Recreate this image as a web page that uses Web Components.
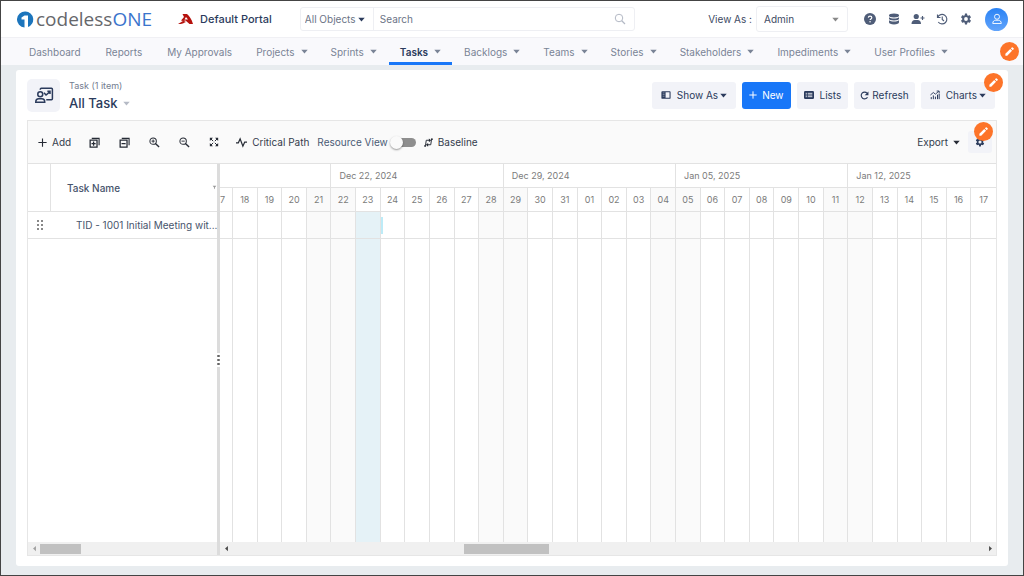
<!DOCTYPE html>
<html lang="en">
<head>
<meta charset="utf-8">
<meta name="viewport" content="width=device-width, initial-scale=1">
<title>All Task - Default Portal</title>
<style>
  body {
    margin: 0;
    font: 10px/14px Inter, "Liberation Sans", sans-serif;
    color: #3d4a63;
    --navy: #2b3b5c;
    --line: #e2e2e2;
    --soft: #f2f3f8;
    --blue: #1877f8;
  }
</style>
</head>
<body>
<task-app></task-app>

<script>
const define = (name, css, html, setup) => {
  const tpl = document.createElement('template');
  tpl.innerHTML = `<style>*{box-sizing:border-box}button,input,select{font:inherit;color:inherit;margin:0}${css}</style>${html}`;
  customElements.define(name, class extends HTMLElement {
    constructor() {
      super();
      this.attachShadow({ mode: 'open' }).append(tpl.content.cloneNode(true));
    }
    connectedCallback() {
      if (setup && !this.ready) { this.ready = true; setup(this, this.shadowRoot); }
    }
  });
};

/* ---------- icons ---------- */
const stroke = (d, w = 2) => `<path d="${d}" fill="none" stroke="currentColor" stroke-width="${w}"/>`;
const gear = '<path fill-rule="evenodd" d="M19.4 13c.05-.33.1-.66.1-1s-.05-.67-.1-1l2.3-1.8c.2-.16.26-.45.13-.68l-2.2-3.8c-.13-.23-.42-.32-.66-.22l-2.7 1.08a7.6 7.6 0 0 0-1.72-1l-.4-2.88A.55.55 0 0 0 13.6 1h-3.2c-.27 0-.5.2-.55.7l-.4 2.88c-.62.26-1.2.6-1.72 1L5.03 4.5c-.24-.1-.53 0-.66.22l-2.2 3.8c-.13.23-.07.52.13.68L4.6 11c-.05.33-.1.66-.1 1s.05.67.1 1l-2.3 1.8c-.2.16-.26.45-.13.68l2.2 3.8c.13.23.42.32.66.22l2.7-1.08c.53.4 1.1.74 1.72 1l.4 2.88c.05.4.28.7.55.7h3.2c.27 0 .5-.3.55-.7l.4-2.88c.62-.26 1.2-.6 1.72-1l2.7 1.08c.24.1.53 0 .66-.22l2.2-3.8c.13-.23.07-.52-.13-.68L19.4 13zM12 15.8a3.8 3.8 0 1 1 0-7.6 3.8 3.8 0 0 1 0 7.6z"/>';
const icons = {
  caret: '<path d="M1 6h22L12 19z"/>',
  left: '<path d="M17 3v18L7 12z"/>',
  right: '<path d="M7 3v18l10-9z"/>',
  search: '<circle cx="10" cy="10" r="7.5" fill="none" stroke="currentColor" stroke-width="2"/>' + stroke('M15.5 15.5L22 22', 2.4),
  help: '<circle cx="12" cy="12" r="12"/><path d="M8.6 9.2c.2-2 1.6-3 3.5-3 2 0 3.5 1.1 3.5 3 0 2.6-3.4 2.6-3.4 5" fill="none" stroke="#fff" stroke-width="2.4"/><circle cx="12.1" cy="17.3" r="1.5" fill="#fff"/>',
  database: '<path d="M2 4.5C2 2.5 6 1 12 1s10 1.5 10 3.500v1.200C22 7.600 18 9 12 9S2 7.600 2 5.700zM2 8.500C4 10.200 8 11 12 11s8-.8 10-2.500v3.200c0 1.900-4 3.300-10 3.300S2 13.600 2 11.700zM2 14.500C4 16.200 8 17 12 17s8-.8 10-2.500v4c0 2.500-4 4.500-10 4.500S2 21 2 18.500z"/>',
  userplus: '<circle cx="8.5" cy="7" r="5.2"/><path d="M-1 22c0-5 3-8 6.500-8h6c3.500 0 6.500 3 6.500 8z"/>' + stroke('M21 6v8M17 10h8', 2.3),
  history: stroke('M3 3v6h6M3.5 8.5A9.5 9.5 0 1 1 4.5 18M12.5 7v6l3.5 3', 2.3),
  gear,
  person: '<circle cx="12" cy="7.5" r="5" fill="none" stroke="currentColor" stroke-width="1.8"/>' + stroke('M3.5 21c0-4.5 2.5-6.5 6-6.5h5c3.5 0 6 2 6 6.5z', 1.8),
  pencil: '<path d="M3 17v4h4L17.6 10.4l-4-4zM21 7a1.400 1.400 0 0 0 0-2l-2-2a1.400 1.400 0 0 0-2 0l-2 2 4 4z"/>',
  training: '<circle cx="7" cy="11" r="3.3" fill="none" stroke="currentColor" stroke-width="2"/>' + stroke('M1 21.5c0-3 1.8-4.5 4-4.5h4c2.200 0 4 1.500 4 4.500zM7 5V4.500C7 3.500 7.500 3 8.500 3H22c.8 0 1.200.4 1.200 1.200V17c0 .8-.4 1.200-1.200 1.200h-7M12 9l2.700 3L20 7.500M16.500 7H20v3.500', 2),
  panel: '<path fill-rule="evenodd" d="M3 3h18a2 2 0 0 1 2 2v14a2 2 0 0 1-2 2H3a2 2 0 0 1-2-2V5a2 2 0 0 1 2-2zm8 2.500v13h9.500v-13z"/>' + '<path d="M4 7h4.500M4 11h4.500M4 15h4.500" stroke="#aab2c4" stroke-width="1.500"/>',
  plus: stroke('M12 1v22M1 12h22', 3),
  list: '<rect x="0" y="2.500" width="24" height="19" rx="3"/><path d="M4 8h3M9 8h11M4 12h3M9 12h11M4 16h3M9 16h11" stroke="#f2f3f8" stroke-width="2"/>',
  refresh: stroke('M20 16.5A9 9 0 1 1 19 6', 3) + '<path d="M22.500 1v10h-10z"/>',
  chart: stroke('M3 22v-5M8 22v-9M13 22v-6M18 22V11M22 22V9', 2.4) + stroke('M1 12l7-6 5 4 8-7M16 2.5h6V8', 2.2),
  expand: stroke('M6 3h16v15', 2.4) + stroke('M2.5 7h15v15h-15zM10 10v9M5.500 14.500h9', 2.8),
  collapse: stroke('M6 3h16v15', 2.4) + stroke('M2.5 7h15v15h-15zM5.500 14.500h9', 2.8),
  zoomin: '<circle cx="9" cy="9" r="7" fill="none" stroke="currentColor" stroke-width="2.2"/>' + stroke('M9 5.500v7M5.500 9h7', 2) + stroke('M14 14l8 8', 3),
  zoomout: '<circle cx="9" cy="9" r="7" fill="none" stroke="currentColor" stroke-width="2.2"/>' + stroke('M5.500 9h7', 2) + stroke('M14 14l8 8', 3),
  fit: '<path d="M2 2h7.500L2 9.500zM22 2v7.500L14.500 2zM2 22v-7.500L9.500 22zM22 22h-7.500l7.500-7.500z"/>' + stroke('M4 4l6 6M20 4l-6 6M4 20l6-6M20 20l-6-6', 2.4),
  pulse: stroke('M0 13h5L9 4l6 16 4-9h5', 2.8),
  baseline: stroke('M4 20L6 6h10M20 4l-2 14H8', 2.6) + '<path d="M13 1l6 5-6 5zM11 13l-6 5 6 5z"/><circle cx="3" cy="21" r="2.600"/><circle cx="21" cy="3" r="2.600"/>',
  filter: '<path d="M3 4h18l-7 8v8l-4-3v-5z"/>'
};
define('ui-icon', ':host{display:inline-block;flex:none;width:var(--size,12px);height:var(--size,12px)}svg{display:block;width:100%;height:100%;overflow:visible}',
  '<svg viewBox="0 0 24 24" fill="currentColor" aria-hidden="true"></svg>',
  (el, root) => { root.querySelector('svg').innerHTML = icons[el.getAttribute('name')] || ''; });

/* ---------- small controls ---------- */
define('edit-badge', `:host{display:block}
  button{display:grid;place-items:center;width:19px;height:19px;padding:0;border:0;border-radius:50%;background:#fd7429;color:#fff}
  ui-icon{--size:11px}`,
  '<button type="button" aria-label="Edit"><ui-icon name="pencil"></ui-icon></button>');

define('pick-list', `:host{display:grid;align-items:center}
  select{grid-area:1/1;width:100%;height:100%;appearance:none;border:0;background:none;padding:0 0 0 var(--pad,4px);outline:0}
  ui-icon{grid-area:1/1;justify-self:end;margin-right:8px;--size:7px;color:var(--arrow,#2b3b5c);pointer-events:none}`,
  '<select></select><ui-icon name="caret"></ui-icon>',
  (el, root) => {
    const s = root.querySelector('select');
    s.setAttribute('aria-label', el.getAttribute('label'));
    s.add(new Option(el.getAttribute('value')));
  });

define('action-button', `:host{display:block}
  button{display:flex;align-items:center;justify-content:center;gap:var(--gap,6px);height:27px;padding:0 var(--pad,9px);border:0;border-radius:3px;background:var(--soft);color:var(--navy);white-space:nowrap}
  :host([primary]) button{background:var(--blue);color:#fff}
  .label{display:flex;align-items:center;gap:2px}
  .caret{--size:7px;display:none}
  :host([menu]) .caret{display:block}
  .icon{--size:var(--icon,10px)}`,
  '<button type="button"><ui-icon class="icon"></ui-icon><span class="label"><slot></slot><ui-icon class="caret" name="caret"></ui-icon></span></button>',
  (el, root) => { const i = root.querySelector('.icon'); i.setAttribute('name', el.getAttribute('icon')); i.shadowRoot.querySelector('svg').innerHTML = icons[el.getAttribute('icon')]; });

/* ---------- header ---------- */
define('brand-logo', `:host{display:flex;align-items:center;gap:2px;font:19px/24px "Open Sans",sans-serif;color:#66676b}
  svg{width:17px;height:17px}b{font-weight:400;color:#3a74cc}`,
  `<svg viewBox="0 0 34 34" aria-hidden="true"><path fill="#1c75bc" d="M17 1a16 16 0 0 1 5 31V9h-7l-6 4v4h6v16A16 16 0 0 1 17 1z"/></svg><span>codeless<b>ONE</b></span>`);

define('top-bar', `
  :host{display:flex;align-items:center;height:37px;padding:0 15px 0 16px;background:#fff;border-bottom:1px solid #f0f0f4}
  .portal{display:flex;align-items:center;gap:7px;margin-left:26px;font-size:11px;font-weight:500;color:var(--navy)}
  .portal svg{width:15px;height:11px}
  form{display:flex;flex:0 1 335px;height:24px;margin-left:28px;border:1px solid #eeeff3;border-radius:3px;align-items:center;color:#6b7486}
  form pick-list{flex:0 0 73px;height:100%;border-right:1px solid #eeeff3}
  input{flex:1;min-width:0;height:100%;border:0;padding:0 6px;background:none;outline:0}
  input::placeholder{color:#6b7486;opacity:1}
  form button{border:0;background:none;padding:0;margin-right:8px;color:#b3b9c5;display:grid}
  .viewas{display:flex;align-items:center;gap:4px;margin-left:auto;white-space:nowrap}
  .viewas pick-list{width:92px;height:26px;border:1px solid #eeeff3;border-radius:3px;--pad:7px;--arrow:#888}
  .tools{display:flex;align-items:center;gap:12px;margin-left:16px;color:#4f5d78}
  .tools button{display:grid;border:0;background:none;padding:0}
  .tools button.me{width:23px;height:23px;margin-left:1px;border-radius:50%;place-items:center;background:linear-gradient(#2a82f4,#62a4fb);color:#fff}`,
  `<brand-logo></brand-logo>
  <span class="portal"><svg viewBox="0 0 30 22" aria-hidden="true"><path fill="#b5120d" fill-rule="evenodd" d="M9 0h9c5 4 9 10 12 20h-7l-8-7-5 1-4-1 6-7zM16 6l-3 5h7zM0 20c5-2 7-6 12-6l4 2c-4 1-6 5-16 4z"/></svg>Default Portal</span>
  <form role="search"><pick-list label="Object" value="All Objects"></pick-list><input type="search" aria-label="Search" placeholder="Search"><button type="button" aria-label="Search"><ui-icon name="search"></ui-icon></button></form>
  <div class="viewas"><span>View As :</span><pick-list label="View As" value="Admin"></pick-list></div>
  <div class="tools">
    <button type="button" aria-label="Help"><ui-icon name="help"></ui-icon></button>
    <button type="button" aria-label="Data"><ui-icon name="database"></ui-icon></button>
    <button type="button" aria-label="Invite"><ui-icon name="userplus"></ui-icon></button>
    <button type="button" aria-label="History"><ui-icon name="history"></ui-icon></button>
    <button type="button" aria-label="Settings"><ui-icon name="gear"></ui-icon></button>
    <button type="button" class="me" aria-label="Account"><ui-icon name="person"></ui-icon></button>
  </div>`);

define('nav-item', `:host{display:block}
  a{display:flex;align-items:center;gap:6px;height:27px;padding:0 12px;border-bottom:3px solid transparent;border-top:3px solid transparent;color:#7a8496;text-decoration:none;white-space:nowrap}
  :host([menu]) a{padding:0 11px}
  ui-icon{display:none;--size:7px}:host([menu]) ui-icon{display:block}
  :host([active]) a{border-bottom-color:var(--blue)}
  :host([active]) span{color:var(--navy);font-weight:600}`,
  '<a href="#"><span><slot></slot></span><ui-icon name="caret"></ui-icon></a>');

define('nav-bar', `:host{display:flex;align-items:center;height:27px;padding:0 4px 0 16px;background:#f9f9fc}
  nav{display:flex;gap:1px;flex:1}`,
  `<nav><nav-item>Dashboard</nav-item><nav-item>Reports</nav-item><nav-item>My Approvals</nav-item>${
    ['Projects', 'Sprints', 'Tasks', 'Backlogs', 'Teams', 'Stories', 'Stakeholders', 'Impediments', 'User Profiles']
      .map(t => `<nav-item menu${t === 'Tasks' ? ' active' : ''}>${t}</nav-item>`).join('')}</nav><edit-badge></edit-badge>`);

/* ---------- page heading ---------- */
define('page-heading', `
  :host{display:flex;align-items:center;position:relative;height:50px;padding-right:2px}
  .tile{display:grid;place-items:center;width:33px;height:33px;border-radius:5px;background:var(--soft);color:var(--navy);--size:18px}
  .names{margin-left:9px;padding-top:2px}
  small{display:block;font-size:9px;line-height:14px;color:#737d90}
  h1{display:flex;align-items:center;gap:6px;margin:0;font-size:13px;line-height:20px;font-weight:500;color:var(--navy)}
  h1 ui-icon{--size:7px;color:#b5bac5}
  .actions{display:flex;gap:6px;margin-left:auto}
  edit-badge{position:absolute;right:-6px;top:3px}`,
  `<span class="tile"><ui-icon name="training"></ui-icon></span>
  <div class="names"><small>Task (1 item)</small><h1>All Task <ui-icon name="caret"></ui-icon></h1></div>
  <div class="actions">
    <action-button icon="panel" menu>Show As</action-button>
    <action-button icon="plus" primary style="--pad:7px;--gap:5px;--icon:8px">New</action-button>
    <action-button icon="list" style="--pad:7px">Lists</action-button>
    <action-button icon="refresh" style="--gap:3px;--pad:6px;--icon:9px">Refresh</action-button>
    <action-button icon="chart" menu>Charts</action-button>
  </div><edit-badge></edit-badge>`);

/* ---------- chart toolbar ---------- */
define('gantt-toolbar', `
  :host{display:flex;align-items:center;position:relative;height:43px;padding:0 4px 0 10px;background:#fafafa;border-bottom:1px solid var(--line);color:#333c4c}
  button{display:flex;align-items:center;gap:5px;border:0;background:none;padding:0;white-space:nowrap;height:20px}
  ui-icon{--size:11px;color:#262b35}
  .icons{display:flex;gap:19px;margin:0 17px 0 18px}
  label{display:flex;align-items:center;gap:4px;margin:0 8px;color:#4b5a75;white-space:nowrap}
  input{appearance:none;position:relative;width:24px;height:9px;border-radius:5px;background:#8e8e8e}
  input::before{content:"";position:absolute;left:-2px;top:-2px;width:13px;height:13px;border-radius:50%;background:#fafafa;box-shadow:0 1px 2px #0006}
  input:checked::before{left:14px}
  .export{margin-left:auto}.export ui-icon{--size:7px}
  .config{width:24px;height:22px;justify-content:center;align-items:center;margin-left:8px;background:var(--soft);border-radius:3px}
  .config ui-icon{--size:10px;color:var(--navy)}
  edit-badge{position:absolute;right:3px;top:1px}`,
  `<button type="button"><ui-icon name="plus" style="--size:9px"></ui-icon>Add</button>
  <div class="icons">
    <button type="button" aria-label="Expand all"><ui-icon name="expand"></ui-icon></button>
    <button type="button" aria-label="Collapse all"><ui-icon name="collapse"></ui-icon></button>
    <button type="button" aria-label="Zoom in"><ui-icon name="zoomin"></ui-icon></button>
    <button type="button" aria-label="Zoom out"><ui-icon name="zoomout"></ui-icon></button>
    <button type="button" aria-label="Zoom to fit"><ui-icon name="fit" style="--size:10px"></ui-icon></button>
  </div>
  <button type="button"><ui-icon name="pulse"></ui-icon>Critical Path</button>
  <label>Resource View <input type="checkbox"></label>
  <button type="button"><ui-icon name="baseline" style="--size:9px"></ui-icon>Baseline</button>
  <button type="button" class="export">Export <ui-icon name="caret"></ui-icon></button>
  <button type="button" class="config" aria-label="Configure"><ui-icon name="gear"></ui-icon></button>
  <edit-badge></edit-badge>`);

/* ---------- chart ---------- */
define('scroll-track', `:host{display:grid;grid-template-columns:12px minmax(0,1fr) 12px;align-items:center;justify-items:center;height:13px;background:#f0f0f0;color:#4a4a4a;--size:7px}
  :host([muted]){color:#a0a0a0}
  .rail{justify-self:stretch;height:10px}
  .thumb{height:100%;width:var(--thumb);margin-left:var(--from);background:#c1c1c1}
  :host([muted]) .end{visibility:hidden}`,
  '<ui-icon name="left"></ui-icon><div class="rail"><div class="thumb"></div></div><ui-icon class="end" name="right"></ui-icon>');

define('task-grid', `
  :host{display:flex;flex-direction:column;min-width:0}
  table{flex:1;display:grid;grid-template-columns:23px minmax(0,1fr);grid-template-rows:48px 27px 1fr}
  thead,tbody,tr{display:contents}
  th,td{display:flex;align-items:center;padding:0;border-bottom:1px solid var(--line);white-space:nowrap;color:#47546c}
  th{font-weight:500}
  th:first-child{border-right:1px solid var(--line)}
  th:last-child{padding-left:16px;justify-content:space-between}
  th ui-icon{--size:5px;color:#999}
  td:last-child{padding-left:25px}
  .grip{display:grid;grid-template-columns:2px 2px;gap:2px;margin-left:9px}
  .grip i{width:2px;height:2px;background:#888}`,
  `<table><thead><tr><th aria-label="Reorder"></th><th>Task Name<ui-icon name="filter"></ui-icon></th></tr></thead>
  <tbody><tr><td><span class="grip">${'<i></i>'.repeat(6)}</span></td><td>TID - 1001 Initial Meeting wit...</td></tr></tbody></table>
  <scroll-track muted style="--thumb:25%;--from:0px"></scroll-track>`);

const start = Date.UTC(2024, 11, 17), DAY = 864e5;
const days = Array.from({ length: 32 }, (_, i) => new Date(start + i * DAY));
const two = d => String(d.getUTCDate()).padStart(2, '0');
const off = d => d.getUTCDay() % 6 === 0 ? 'off' : '';
const isToday = d => d.getUTCMonth() === 11 && d.getUTCDate() === 23;
const weeks = [['', 5], ['Dec 22, 2024', 7], ['Dec 29, 2024', 7], ['Jan 05, 2025', 7], ['Jan 12, 2025', 6]];
const bodyRow = bar => `<tr>${days.map(d => `<td class="${off(d)}${isToday(d) ? 'today' : ''}">${bar && two(d) === '24' && d.getUTCMonth() === 11 ? '<span class="bar"></span>' : ''}</td>`).join('')}</tr>`;
define('time-line', `
  :host{display:flex;flex-direction:column;min-width:0}
  table{flex:1;display:grid;grid-template-columns:13px repeat(31,minmax(0,1fr));grid-template-rows:24px 24px 27px 1fr}
  thead,tbody,tr{display:contents}
  th,td{display:flex;align-items:center;min-width:0;padding:0;border-right:1px solid var(--line);border-bottom:1px solid var(--line);font-size:9px;font-weight:400;color:#7b7b7b}
  th:last-child,td:last-child{border-right:0}
  .week{padding-left:8px;white-space:nowrap}
  .day{justify-content:center}
  .day:first-child{justify-content:flex-start}
  .off{background:#fafafa}.today{background:#e5f2f7}
  tr:last-child td{border-bottom:0}
  .bar{width:2px;height:17px;background:#bdebf7}`,
  `<table><thead><tr>${weeks.map(([t, n]) => `<th class="week" style="grid-column:span ${n}">${t}</th>`).join('')}</tr>
  <tr>${days.map((d, i) => `<th class="day ${off(d)}">${i ? two(d) : two(d)[1]}</th>`).join('')}</tr></thead>
  <tbody>${bodyRow(true)}${bodyRow(false)}</tbody></table>
  <scroll-track style="--thumb:11.3%;--from:30.8%"></scroll-track>`);

define('gantt-chart', `
  :host{display:flex;flex-direction:column;flex:1;border:1px solid #e6e6e6}
  .panes{flex:1;display:grid;grid-template-columns:189px 3px minmax(0,1fr)}
  .split{display:grid;place-items:center;background:#dcdcdc}
  .dots{display:grid;gap:2px;padding:2px 0;background:#fff}
  .dots i{width:3px;height:2px;background:#666;border-radius:1px}`,
  `<gantt-toolbar></gantt-toolbar><div class="panes"><task-grid></task-grid><div class="split"><span class="dots"><i></i><i></i><i></i></span></div><time-line></time-line></div>`);

define('task-app', `
  :host{display:flex;flex-direction:column;min-height:100vh;border:1px solid #444;background:#e8ecef;box-sizing:border-box}
  main{flex:1;display:flex;flex-direction:column;margin:5px 15px 9px;padding:0 11px 10px;background:#fff;border-radius:3px}`,
  `<top-bar></top-bar><nav-bar></nav-bar><main><page-heading></page-heading><gantt-chart></gantt-chart></main>`);
</script>
</body>
</html>
